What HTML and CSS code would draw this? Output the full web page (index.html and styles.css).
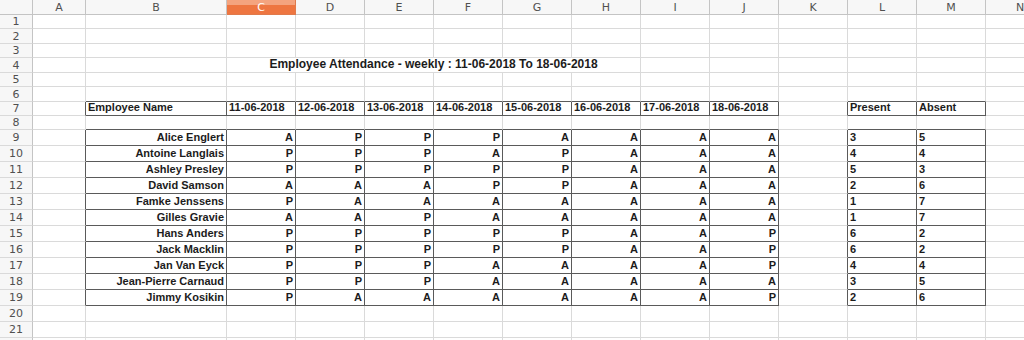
FILE: index.html
```html
<!DOCTYPE html>
<html>
<head>
<meta charset="utf-8">
<link rel="stylesheet" href="styles.css">
</head>
<body>
<div class="sheet">
  <div class="corner"></div><div class="ch">A</div><div class="ch">B</div><div class="ch sel">C</div><div class="ch">D</div><div class="ch">E</div><div class="ch">F</div><div class="ch">G</div><div class="ch">H</div><div class="ch">I</div><div class="ch">J</div><div class="ch">K</div><div class="ch">L</div><div class="ch">M</div><div class="ch">N</div>

  <div class="rh">1</div><div></div><div></div><div></div><div></div><div></div><div></div><div></div><div></div><div></div><div></div><div></div><div></div><div></div><div></div>
  <div class="rh">2</div><div></div><div></div><div></div><div></div><div></div><div></div><div></div><div></div><div></div><div></div><div></div><div></div><div></div><div></div>
  <div class="rh">3</div><div></div><div></div><div></div><div></div><div></div><div></div><div></div><div></div><div></div><div></div><div></div><div></div><div></div><div></div>
  <div class="rh">4</div><div></div><div></div><div class="title">Employee Attendance - weekly : 11-06-2018 To 18-06-2018</div><div></div><div></div><div></div><div></div><div></div><div></div>
  <div class="rh">5</div><div></div><div></div><div></div><div></div><div></div><div></div><div></div><div></div><div></div><div></div><div></div><div></div><div></div><div></div>
  <div class="rh">6</div><div></div><div class="db"></div><div class="db"></div><div class="db"></div><div class="db"></div><div class="db"></div><div class="db"></div><div class="db"></div><div class="db"></div><div class="db"></div><div></div><div class="db"></div><div class="db"></div><div></div>
  <div class="rh">7</div><div class="dr"></div><div class="box l">Employee Name</div><div class="box l">11-06-2018</div><div class="box l">12-06-2018</div><div class="box l">13-06-2018</div><div class="box l">14-06-2018</div><div class="box l">15-06-2018</div><div class="box l">16-06-2018</div><div class="box l">17-06-2018</div><div class="box l">18-06-2018</div><div class="dr"></div><div class="box l">Present</div><div class="box l">Absent</div><div></div>
  <div class="rh">8</div><div></div><div class="db"></div><div class="db"></div><div class="db"></div><div class="db"></div><div class="db"></div><div class="db"></div><div class="db"></div><div class="db"></div><div class="db"></div><div></div><div class="db"></div><div class="db"></div><div></div>

  <div class="rh">9</div><div class="dr"></div><div class="box r">Alice Englert</div><div class="box r">A</div><div class="box r">P</div><div class="box r">P</div><div class="box r">P</div><div class="box r">A</div><div class="box r">A</div><div class="box r">A</div><div class="box r">A</div><div class="dr"></div><div class="box l">3</div><div class="box l">5</div><div></div>
  <div class="rh">10</div><div class="dr"></div><div class="box r">Antoine Langlais</div><div class="box r">P</div><div class="box r">P</div><div class="box r">P</div><div class="box r">A</div><div class="box r">P</div><div class="box r">A</div><div class="box r">A</div><div class="box r">A</div><div class="dr"></div><div class="box l">4</div><div class="box l">4</div><div></div>
  <div class="rh">11</div><div class="dr"></div><div class="box r">Ashley Presley</div><div class="box r">P</div><div class="box r">P</div><div class="box r">P</div><div class="box r">P</div><div class="box r">P</div><div class="box r">A</div><div class="box r">A</div><div class="box r">A</div><div class="dr"></div><div class="box l">5</div><div class="box l">3</div><div></div>
  <div class="rh">12</div><div class="dr"></div><div class="box r">David Samson</div><div class="box r">A</div><div class="box r">A</div><div class="box r">A</div><div class="box r">P</div><div class="box r">P</div><div class="box r">A</div><div class="box r">A</div><div class="box r">A</div><div class="dr"></div><div class="box l">2</div><div class="box l">6</div><div></div>
  <div class="rh">13</div><div class="dr"></div><div class="box r">Famke Jenssens</div><div class="box r">P</div><div class="box r">A</div><div class="box r">A</div><div class="box r">A</div><div class="box r">A</div><div class="box r">A</div><div class="box r">A</div><div class="box r">A</div><div class="dr"></div><div class="box l">1</div><div class="box l">7</div><div></div>
  <div class="rh">14</div><div class="dr"></div><div class="box r">Gilles Gravie</div><div class="box r">A</div><div class="box r">A</div><div class="box r">P</div><div class="box r">A</div><div class="box r">A</div><div class="box r">A</div><div class="box r">A</div><div class="box r">A</div><div class="dr"></div><div class="box l">1</div><div class="box l">7</div><div></div>
  <div class="rh">15</div><div class="dr"></div><div class="box r">Hans Anders</div><div class="box r">P</div><div class="box r">P</div><div class="box r">P</div><div class="box r">P</div><div class="box r">P</div><div class="box r">A</div><div class="box r">A</div><div class="box r">P</div><div class="dr"></div><div class="box l">6</div><div class="box l">2</div><div></div>
  <div class="rh">16</div><div class="dr"></div><div class="box r">Jack Macklin</div><div class="box r">P</div><div class="box r">P</div><div class="box r">P</div><div class="box r">P</div><div class="box r">P</div><div class="box r">A</div><div class="box r">A</div><div class="box r">P</div><div class="dr"></div><div class="box l">6</div><div class="box l">2</div><div></div>
  <div class="rh">17</div><div class="dr"></div><div class="box r">Jan Van Eyck</div><div class="box r">P</div><div class="box r">P</div><div class="box r">P</div><div class="box r">A</div><div class="box r">A</div><div class="box r">A</div><div class="box r">A</div><div class="box r">P</div><div class="dr"></div><div class="box l">4</div><div class="box l">4</div><div></div>
  <div class="rh">18</div><div class="dr"></div><div class="box r">Jean-Pierre Carnaud</div><div class="box r">P</div><div class="box r">P</div><div class="box r">P</div><div class="box r">A</div><div class="box r">A</div><div class="box r">A</div><div class="box r">A</div><div class="box r">A</div><div class="dr"></div><div class="box l">3</div><div class="box l">5</div><div></div>
  <div class="rh">19</div><div class="dr"></div><div class="box r">Jimmy Kosikin</div><div class="box r">P</div><div class="box r">A</div><div class="box r">A</div><div class="box r">A</div><div class="box r">A</div><div class="box r">A</div><div class="box r">A</div><div class="box r">P</div><div class="dr"></div><div class="box l">2</div><div class="box l">6</div><div></div>

  <div class="rh">20</div><div></div><div></div><div></div><div></div><div></div><div></div><div></div><div></div><div></div><div></div><div></div><div></div><div></div><div></div>
  <div class="rh">21</div><div></div><div></div><div></div><div></div><div></div><div></div><div></div><div></div><div></div><div></div><div></div><div></div><div></div><div></div>
  <div class="rh"></div><div></div><div></div><div></div><div></div><div></div><div></div><div></div><div></div><div></div><div></div><div></div><div></div><div></div><div></div>
</div>
</body>
</html>
```

FILE: styles.css
```css
html, body {
  margin: 0;
  padding: 0;
  background: #ffffff;
}

.sheet {
  display: grid;
  grid-template-columns: 33px 53px 141px repeat(12, 69px);
  grid-template-rows: 15px 14px 15px 14px 15px 14px 15px 14px 14px repeat(14, 16px);
  width: 1024px;
  height: 340px;
  overflow: hidden;
  font-family: "Liberation Sans", Arial, sans-serif;
  font-size: 11px;
  font-weight: bold;
  color: #1c1c1c;
}

.sheet > div {
  box-sizing: border-box;
  border-right: 1px solid #dadada;
  border-bottom: 1px solid #dadada;
  display: flex;
  align-items: flex-end;
  padding: 0 2px 1px 2px;
  line-height: 13px;
  white-space: nowrap;
  overflow: visible;
}

.sheet > .corner {
  background: #f7f7f7;
  border-right: 1px solid #c4c4c4;
  border-bottom: 1px solid #c4c4c4;
}

.sheet > .ch {
  background: #f7f7f7;
  border-right: 1px solid #c4c4c4;
  border-bottom: 1px solid #c4c4c4;
  justify-content: center;
  align-items: center;
  padding: 0;
  font-family: "DejaVu Sans", sans-serif;
  font-weight: normal;
  font-size: 11px;
  color: #505050;
}

.sheet > .ch.sel {
  background: linear-gradient(#f4a47f 0, #f4a47f 5px, #ee7641 5px, #ee7641 100%);
  color: #ffffff;
  border-right-color: #e07a4c;
  border-bottom-color: #e07a4c;
}

.sheet > .rh {
  background: #f7f7f7;
  border-right: 1px solid #c4c4c4;
  justify-content: center;
  align-items: center;
  padding: 0;
  font-family: "DejaVu Sans", sans-serif;
  font-weight: normal;
  font-size: 11px;
  color: #505050;
}

.sheet > .title {
  grid-column: span 6;
  justify-content: center;
  font-size: 12px;
}

.sheet > .db {
  border-bottom-color: #5a5a5a;
}

.sheet > .dr {
  border-right-color: #5a5a5a;
}

.sheet > .box {
  border-right-color: #5a5a5a;
  border-bottom-color: #5a5a5a;
}

.sheet > .r {
  justify-content: flex-end;
}

.sheet > .l {
  justify-content: flex-start;
}
```
